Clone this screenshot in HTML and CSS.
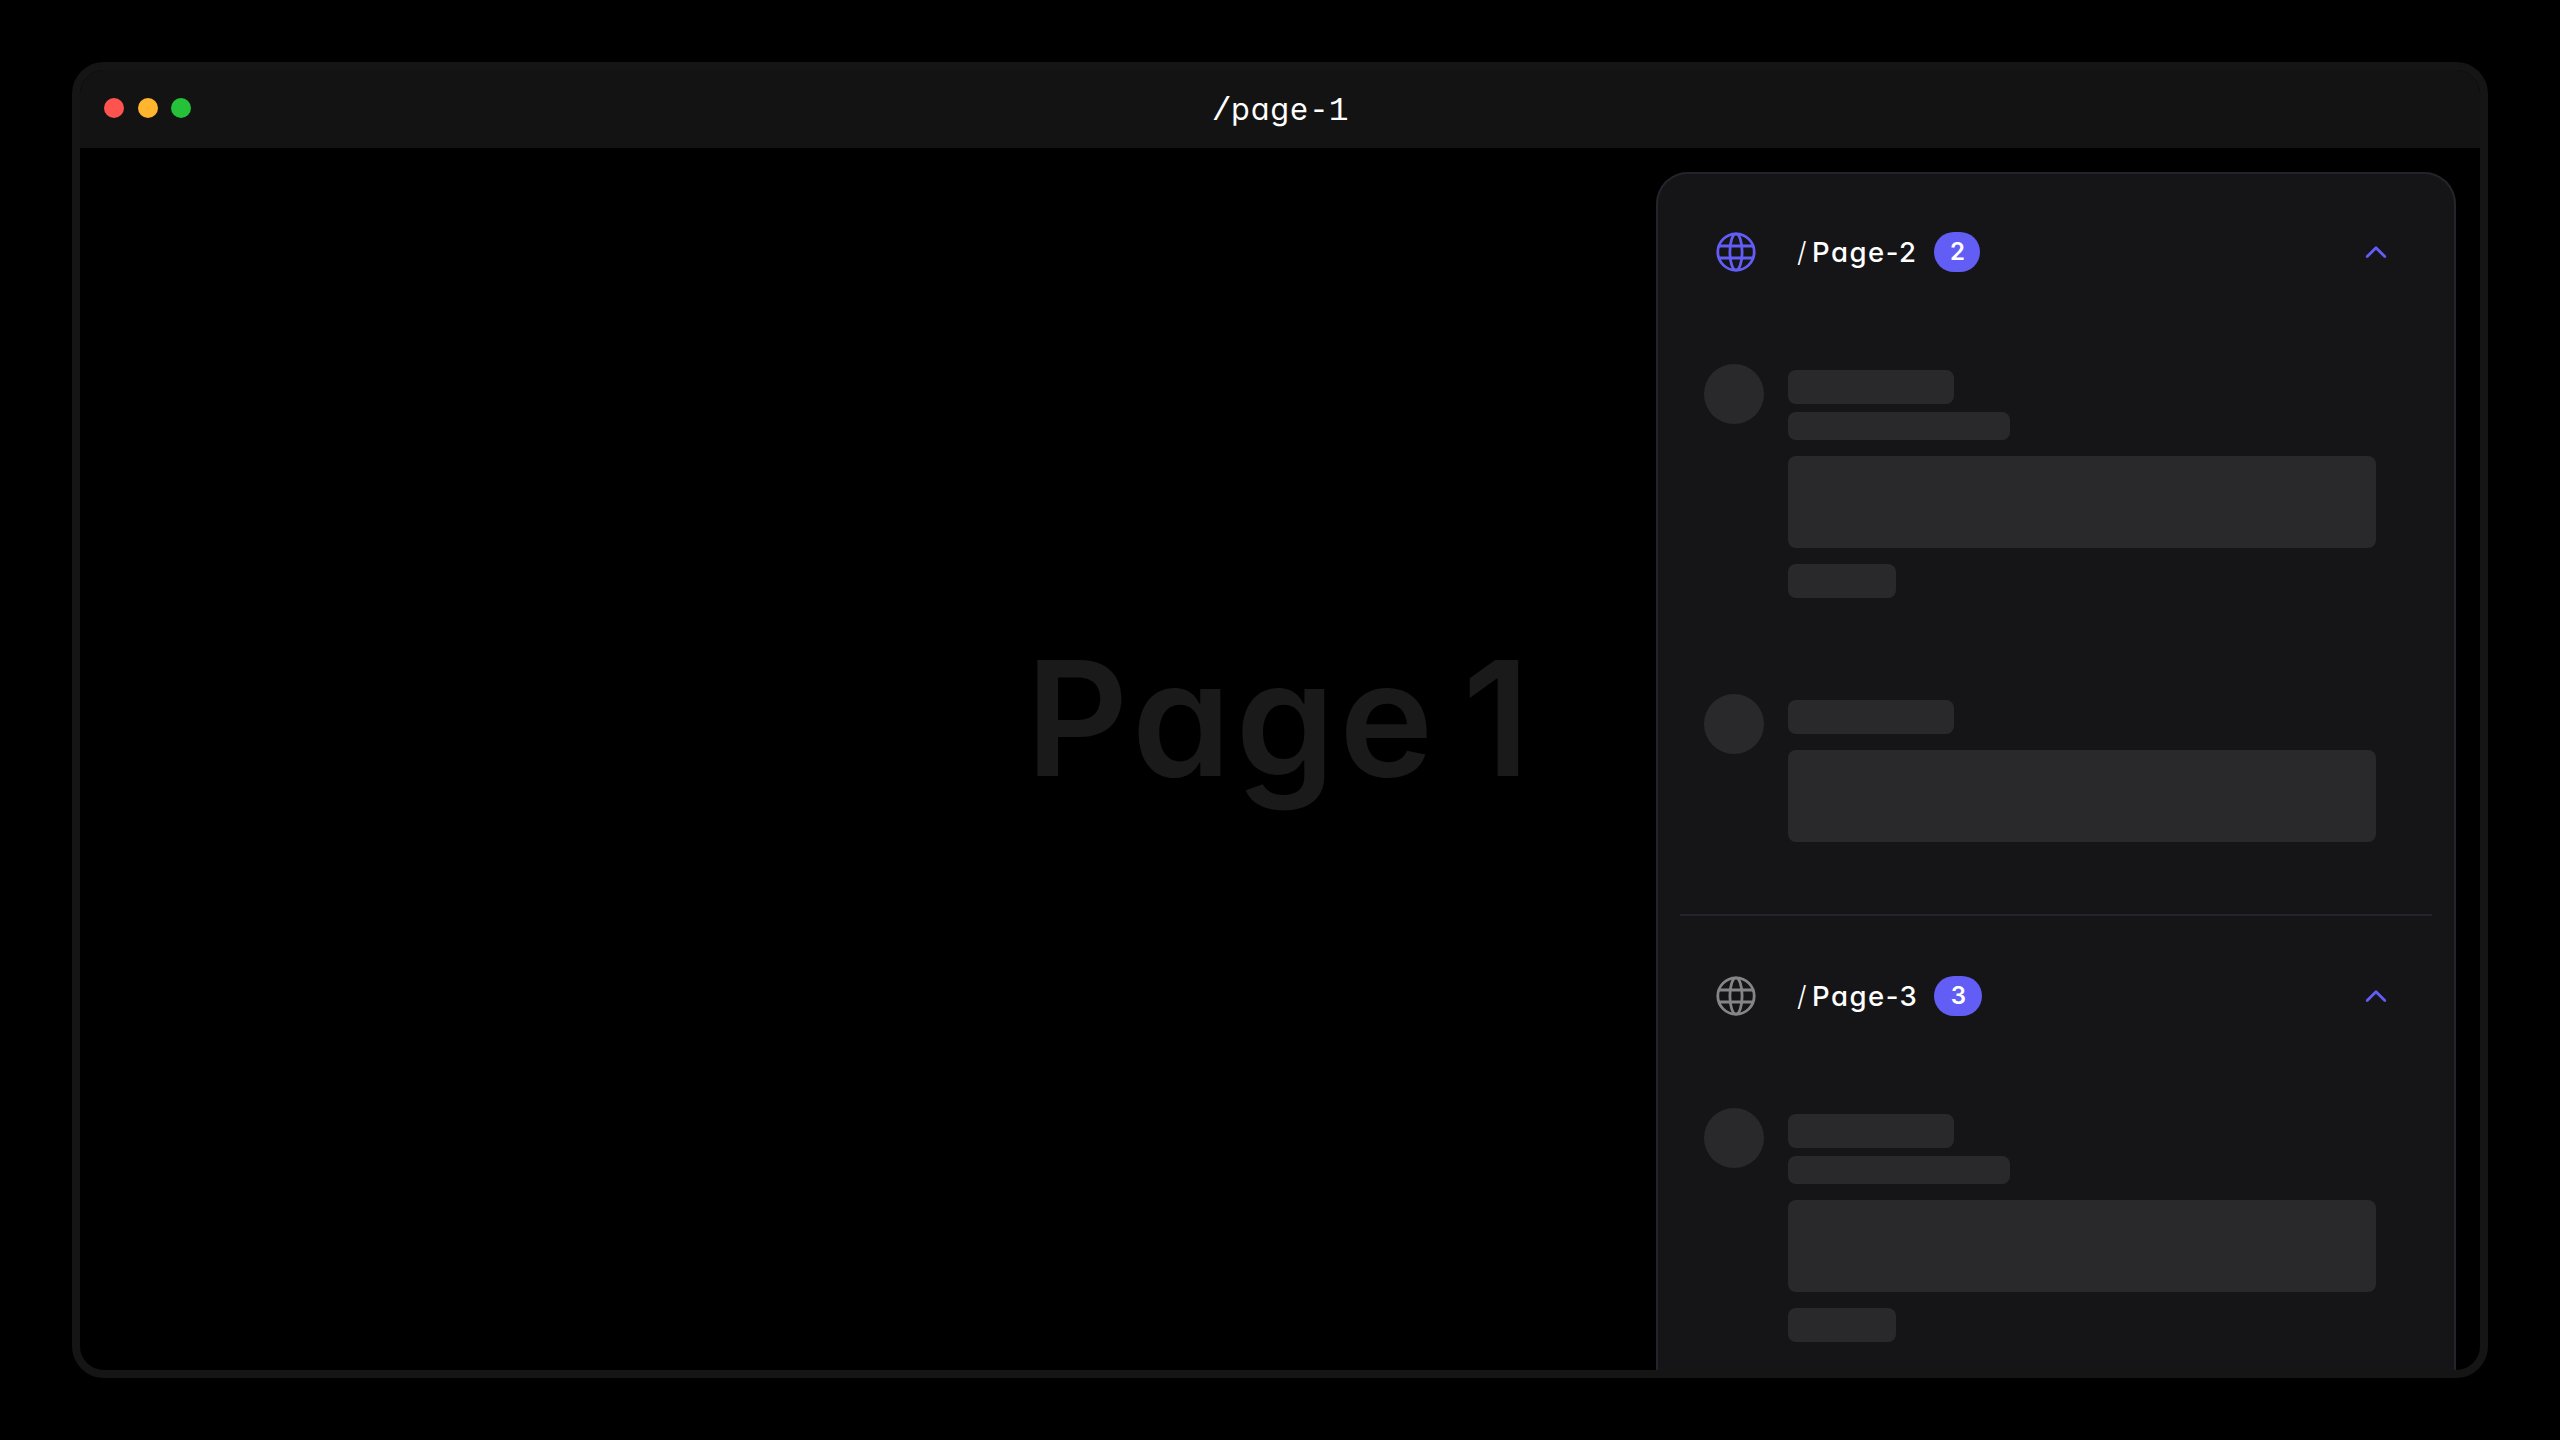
FILE: index.html
```html
<!DOCTYPE html>
<html lang="en">
<head>
<meta charset="utf-8">
<title>/page-1</title>
<link rel="stylesheet" href="styles.css">
</head>
<body>
<svg class="defs" width="0" height="0">
  <symbol id="globe" viewBox="0 0 40 40">
    <g fill="none" stroke="currentColor" stroke-width="2.8">
      <circle cx="20" cy="20" r="18.2"/>
      <ellipse cx="20" cy="20" rx="6.1" ry="18.2"/>
      <path d="M3 14H37M3 26H37"/>
    </g>
  </symbol>
  <symbol id="chevron" viewBox="0 0 24 24">
    <path d="M3.2 16.6L12 7.8L20.8 16.6" fill="none" stroke="currentColor" stroke-width="2.8" stroke-linecap="round" stroke-linejoin="round"/>
  </symbol>
</svg>
<main class="window">
  <header class="titlebar">
    <div class="lights"><i class="light red"></i><i class="light amber"></i><i class="light green"></i></div>
    <div class="path"><span class="slash">/</span><span class="name">page</span><span class="dash">-</span><span class="digit">1</span></div>
  </header>
  <div class="viewport">
    <h1 class="page-title">Page 1</h1>
    <aside class="panel">
      <section class="group">
        <div class="group-head">
          <svg class="globe active"><use href="#globe"/></svg>
          <span class="sep">/</span><span class="label">Page-2</span><span class="count">2</span>
          <svg class="chevron"><use href="#chevron"/></svg>
        </div>
        <div class="comments">
          <div class="comment"><div class="avatar"></div><div class="lines"><div class="bar author"></div><div class="bar meta"></div><div class="bar text"></div><div class="bar action"></div></div></div>
          <div class="comment"><div class="avatar"></div><div class="lines"><div class="bar author"></div><div class="bar text"></div></div></div>
        </div>
      </section>
      <section class="group">
        <div class="group-head">
          <svg class="globe"><use href="#globe"/></svg>
          <span class="sep">/</span><span class="label">Page-3</span><span class="count wide">3</span>
          <svg class="chevron"><use href="#chevron"/></svg>
        </div>
        <div class="comments">
          <div class="comment"><div class="avatar"></div><div class="lines"><div class="bar author"></div><div class="bar meta"></div><div class="bar text"></div><div class="bar action"></div></div></div>
        </div>
      </section>
    </aside>
  </div>
</main>
</body>
</html>
```
FILE: styles.css
```css
* { box-sizing: border-box; }

body {
  margin: 0;
  width: 2560px;
  height: 1440px;
  padding: 62px 72px;
  overflow: hidden;
  background: #000;
  color: #fff;
  font-family: Inter, "Open Sans", sans-serif;
  font-feature-settings: "cv11" 1;
}

.defs { position: absolute; }

.window {
  display: flex;
  flex-direction: column;
  height: 1316px;
  border: 8px solid #151515;
  border-radius: 32px;
  overflow: hidden;
  background: #000;
}

.titlebar {
  display: grid;
  grid-template-columns: 1fr auto 1fr;
  align-items: center;
  flex: none;
  height: 78px;
  padding: 0 24px;
  background: #131313;
}

.lights { display: flex; gap: 13.6px; margin-top: -2px; }
.light { width: 20px; height: 20px; border-radius: 50%; }
.red { background: #ff5350; }
.amber { background: #ffb52e; }
.green { background: #25c138; }

.path {
  display: flex;
  align-items: baseline;
  padding-top: 2px;
  font-size: 30px;
  line-height: 40px;
  font-weight: 400;
}
.name { letter-spacing: 1.3px; }
.slash, .dash, .digit {
  width: 19.6px;
  font-family: "Liberation Mono", monospace;
  font-size: 33px;
  text-align: center;
}

.viewport {
  display: grid;
  flex: 1;
  min-height: 0;
  overflow: hidden;
  grid-template-rows: 1222px;
}

.page-title {
  grid-area: 1 / 1;
  place-self: center;
  margin: 0 0 82px;
  font-size: 159px;
  line-height: 200px;
  font-weight: 600;
  letter-spacing: 4.5px;
  word-spacing: -20px;
  color: #1a1a1a;
}

.panel {
  grid-area: 1 / 1;
  justify-self: end;
  width: 800px;
  height: 1300px;
  margin: 24px 24px 0 0;
  padding: 0 24px;
  border-radius: 32px;
  background: #151517;
  box-shadow: inset 0 0 0 2px #23242c;
}

.group { height: 744px; border-bottom: 2px solid #23242c; }

.group-head {
  display: flex;
  align-items: center;
  height: 160px;
  padding: 0 44px 0 36px;
  font-size: 27.5px;
  line-height: 40px;
  font-weight: 500;
}
.globe { width: 40px; height: 40px; color: #858585; }
.active, .chevron { color: #625df5; }
.sep { width: 15px; margin-left: 41px; font-weight: 300; }
.label { width: 122px; letter-spacing: 1.5px; }
.count {
  width: 46px;
  height: 40px;
  padding-left: 1px;
  border-radius: 20px;
  background: #625df5;
  font-size: 24px;
  font-weight: 600;
  line-height: 39px;
  text-align: center;
}
.wide { width: 48px; }
.chevron { width: 24px; height: 24px; margin-left: auto; }

.comments {
  display: flex;
  flex-direction: column;
  gap: 96px;
  padding: 32px 56px 0 24px;
}
.comment { display: flex; gap: 24px; }
.avatar { flex: none; width: 60px; height: 60px; border-radius: 50%; background: #29292b; }
.lines { flex: 1; padding-top: 6px; }
.bar { border-radius: 8px; background: #29292b; }
.author { width: 166px; height: 34px; }
.meta { width: 222px; height: 28px; margin-top: 8px; }
.text { height: 92px; margin-top: 16px; }
.action { width: 108px; height: 34px; margin-top: 16px; }
```
